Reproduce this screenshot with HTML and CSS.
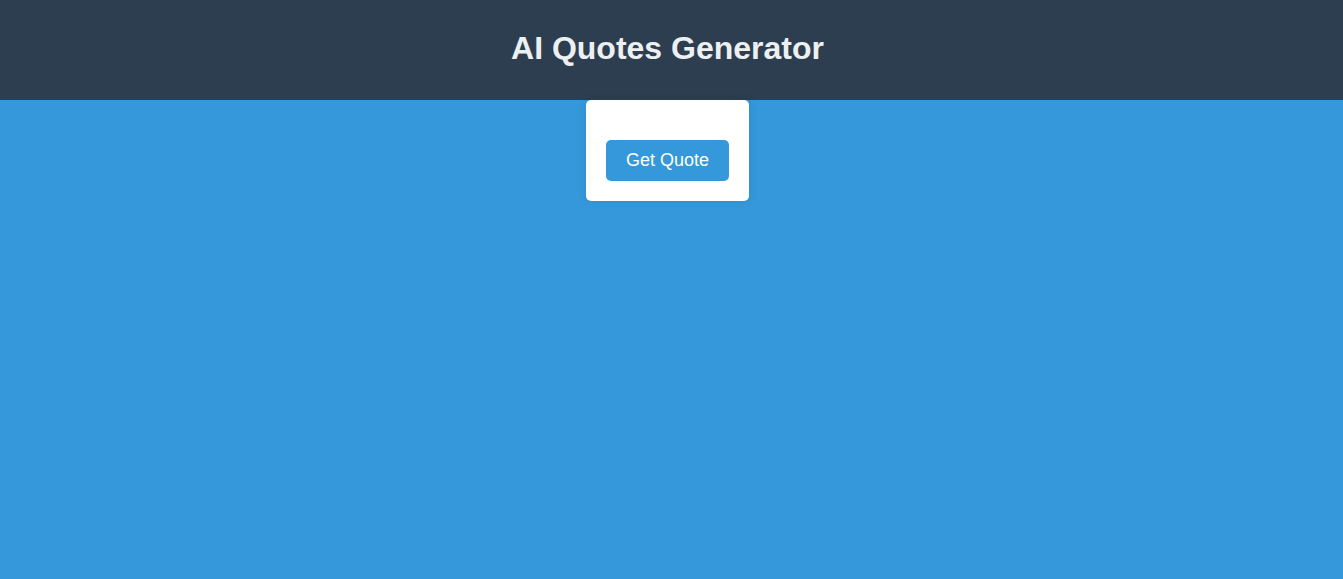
FILE: index.html
```html
<!DOCTYPE html>
<html lang="en">
<head>
<meta charset="utf-8">
<title>AI Quotes Generator</title>
<link rel="stylesheet" href="styles.css">
</head>
<body>
<header class="site-header">
  <h1 class="site-title">AI Quotes Generator</h1>
</header>
<main class="main">
  <div class="quote-card">
    <p class="quote-text"></p>
    <button class="quote-btn" type="button">Get Quote</button>
  </div>
</main>
</body>
</html>
```

FILE: styles.css
```css
* { box-sizing: border-box; }
html, body { margin: 0; padding: 0; }
body {
  background: #3498db;
  font-family: "Liberation Sans", Arial, sans-serif;
  min-height: 579px;
}
.site-header {
  background: #2c3e50;
  height: 100px;
  padding-right: 8px;
  display: flex;
  align-items: center;
  justify-content: center;
}
.site-title {
  margin: 0;
  color: #ecf0f1;
  font-size: 32px;
  font-weight: bold;
  line-height: 37px;
  position: relative;
  top: -2px;
}
.main {
  display: flex;
  justify-content: center;
  padding-right: 8px;
}
.quote-card {
  background: #fff;
  border-radius: 5px;
  padding: 20px;
  box-shadow: 0 0 10px rgba(0, 0, 0, 0.1);
  display: flex;
  flex-direction: column;
  align-items: center;
}
.quote-text {
  margin: 0;
  height: 20px;
}
.quote-btn {
  background: #3498db;
  color: #fff;
  border: none;
  border-radius: 5px;
  font-family: "Liberation Sans", Arial, sans-serif;
  font-size: 18px;
  line-height: 21px;
  padding: 10px 20px;
  cursor: pointer;
}
```
